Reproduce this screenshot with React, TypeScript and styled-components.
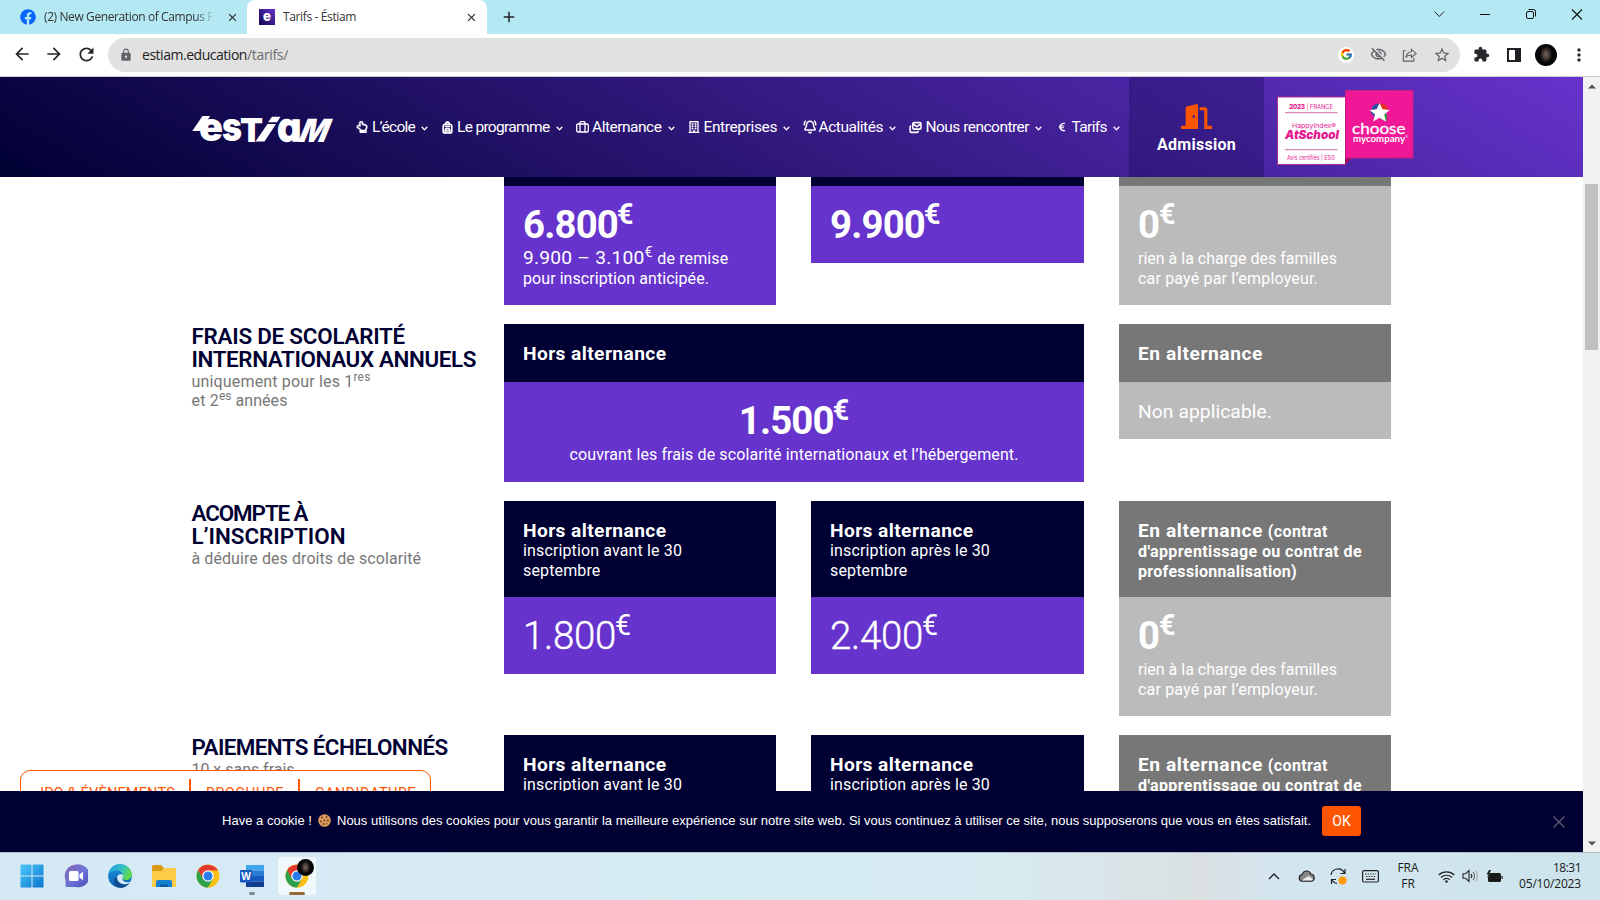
import React, { useLayoutEffect, useRef, useState } from "react";
import styled, { createGlobalStyle } from "styled-components";
import { Backpack, BellRing, Mails } from "lucide-react";
import { FaFacebook, FaDoorOpen, FaRegHandPointUp, FaRegBuilding, FaChevronDown, FaEuroSign } from "react-icons/fa";
import {
  MdArrowBack, MdArrowForward, MdRefresh, MdLock, MdOutlineVisibilityOff, MdStarBorder,
  MdExtension, MdMoreVert, MdClose, MdAdd,
} from "react-icons/md";
import { FcGoogle } from "react-icons/fc";

const NAVY = "#000033";
const VIOLET = "#6633cc";
const ORANGE = "#ff5500";

const GlobalStyle = createGlobalStyle`
  * { box-sizing: border-box; }
  body { margin: 0; background: #fff; font-family: Roboto, "Open Sans", sans-serif; overflow: hidden; }
  svg { display: block; flex: none; }
`;

/* Text tracked so that it spans a given width. */
const FitSpan = styled.span`
  white-space: nowrap;
`;
function Fit({ w, children }: { w: number; children: string }) {
  const ref = useRef<HTMLSpanElement>(null);
  const [track, setTrack] = useState(0);
  useLayoutEffect(() => {
    if (ref.current) {
      const natural = ref.current.getBoundingClientRect().width;
      setTrack((w - natural) / children.length);
    }
  }, []);
  return <FitSpan ref={ref} style={{ letterSpacing: `${track}px` }}>{children}</FitSpan>;
}

const Screen = styled.div`
  width: 1600px;
  height: 900px;
  display: flex;
  flex-direction: column;
  overflow: hidden;
`;

/* ---------- browser chrome ---------- */
const TabStrip = styled.div`
  height: 34px;
  flex: none;
  display: flex;
  background: #b4e8f3;
  font: 12px/34px "Open Sans", "Noto Sans", sans-serif;
  color: #333;
`;
const Tab = styled.div<{ $active?: boolean; $width: number }>`
  width: ${(p) => p.$width}px;
  padding: 0 ${(p) => (p.$active ? 9 : 8)}px 0 ${(p) => (p.$active ? 12 : 20)}px;
  display: flex;
  align-items: center;
  background: ${(p) => (p.$active ? "#fff" : "transparent")};
  border-radius: ${(p) => (p.$active ? "8px 8px 0 0" : 0)};
`;
const TabTitle = styled.div<{ $fade?: boolean }>`
  flex: 1;
  margin: 0 14px 0 8px;
  overflow: hidden;
  white-space: nowrap;
  ${(p) => p.$fade && "mask-image: linear-gradient(to right, #000 90%, rgba(0,0,0,.15) 100%);"}
`;
const Favicon = styled.div`
  width: 16px;
  height: 16px;
  background: linear-gradient(45deg, #100550, #6633cc);
  color: #fff;
  font: 900 13px/14px Inter, sans-serif;
  text-align: center;
`;
const NewTab = styled.div`
  flex: 1;
  display: flex;
  align-items: center;
  padding-left: 13px;
`;
const WindowButtons = styled.div`
  display: flex;
  width: 184px;
  height: 28px;
  align-items: center;
  svg { width: 46px; }
`;
const Toolbar = styled.div`
  height: 43px;
  flex: none;
  display: flex;
  align-items: center;
  border-bottom: 1px solid #c9cccd;
  color: #27282b;
  padding: 0 10px 1px 12px;
`;
const NavButtons = styled.div`
  display: flex;
  gap: 12px;
  width: 96px;
`;
const Omnibox = styled.div`
  width: 1352px;
  height: 34px;
  border-radius: 17px;
  background: #e1e1e1;
  display: flex;
  align-items: center;
  padding: 0 9px 0 11px;
  font: 14px/34px "Open Sans", "Noto Sans", sans-serif;
  color: #5f6368;
`;
const Url = styled.div`
  flex: 1;
  padding-left: 9px;
  color: #6b6e71;
  b { font-weight: 400; color: #222; }
`;
const OmniIcons = styled.div`
  display: flex;
  align-items: center;
  gap: 15px;
`;
const GoogleDisc = styled.div`
  width: 16px;
  height: 16px;
  margin-right: 1px;
  border-radius: 50%;
  background: #fff;
  display: grid;
  place-items: center;
`;
const Extensions = styled.div`
  flex: 1;
  display: flex;
  align-items: center;
  padding-left: 13px;
`;
const SidePanel = styled.div`
  width: 14px;
  height: 14px;
  border: 2px solid #202124;
  border-right-width: 6px;
  margin: 0 14px 0 17px;
`;
const Avatar = styled.div<{ $size: number }>`
  width: ${(p) => p.$size}px;
  height: ${(p) => p.$size}px;
  border-radius: 50%;
  background: radial-gradient(ellipse 28% 38% at 50% 48%, #77665d 0%, #3c302c 60%, #060606 100%);
`;
const Dots = styled.div`
  margin-left: 12px;
`;

/* ---------- page ---------- */
const Viewport = styled.div`
  height: 775px;
  flex: none;
  display: flex;
`;
const Page = styled.div`
  width: 1583px;
  height: 775px;
  display: flex;
  flex-direction: column;
  overflow: hidden;
`;
const Scrollbar = styled.div`
  width: 17px;
  background: #f1f1f1;
  display: flex;
  flex-direction: column;
  align-items: center;
  justify-content: space-between;
  padding: 7px 0 6px;
`;
const ScrollTrack = styled.div`
  flex: 1;
  width: 13px;
  padding-top: 95px;
`;
const Thumb = styled.div`
  height: 166px;
  background: #c1c1c1;
`;
const Header = styled.header`
  height: 100px;
  flex: none;
  display: flex;
  align-items: stretch;
  padding-left: 192px;
  background: linear-gradient(30deg, ${NAVY}, ${VIOLET});
  color: #fff;
`;
const LogoBox = styled.div`
  width: 164px;
  padding-top: 39px;
`;
const Menu = styled.nav`
  display: flex;
  font-size: 15.5px;
  line-height: 20px;
  padding: 40px 1px 0 0;
`;
const MenuItem = styled.div<{ $width: number; $lead: number }>`
  width: ${(p) => p.$width}px;
  display: flex;
  height: 20px;
  align-items: center;
  & > :first-child { width: ${(p) => p.$lead}px; flex: none; }
  & > :last-child { margin: 3px 0 0 6px; stroke: currentColor; stroke-width: 30px; }
`;
const Admission = styled.div`
  width: 135px;
  background: rgba(0, 0, 51, 0.25);
  display: flex;
  flex-direction: column;
  align-items: center;
  padding-top: 24px;
  font-weight: 700;
  font-size: 16px;
  line-height: 20px;
  svg { color: ${ORANGE}; margin-bottom: 3px; }
`;
const Badges = styled.div`
  display: flex;
  padding: 13px 0 0 13px;
`;

const Content = styled.main`
  height: 614px;
  flex: none;
  overflow: hidden;
  padding-left: 192px;
`;
const Row = styled.section<{ $height: number }>`
  height: ${(p) => p.$height}px;
  display: grid;
  grid-template-columns: 312px 307px 308px 272px;
  align-items: start;
`;
const Label = styled.div`
  font-size: 16px;
  line-height: 19px;
  color: #777;
  margin-left: -0.5px;
  sup { font-size: 12px; line-height: 0; vertical-align: 6px; }
`;
const LabelTitle = styled.h3`
  margin: 0 0 1px;
  padding-top: 1px;
  font-size: 22.4px;
  line-height: 23px;
  font-weight: 600;
  color: ${NAVY};
`;
const Card = styled.article<{ $wide?: boolean; $mid?: boolean }>`
  color: #fff;
  width: ${(p) => (p.$wide ? 580 : p.$mid ? 273 : 272)}px;
  ${(p) => p.$wide && "grid-column: span 2;"}
`;
const CardHead = styled.header<{ $gray?: boolean; $height: number }>`
  height: ${(p) => p.$height}px;
  overflow: hidden;
  background: ${(p) => (p.$gray ? "#777" : NAVY)};
  padding: ${(p) => (p.$height > 10 ? "20px 19px 0" : 0)};
  font-size: 19.2px;
  line-height: 19px;
  font-weight: 700;
`;
const Small = styled.span<{ $bold?: boolean }>`
  font-size: 16px;
  font-weight: ${(p) => (p.$bold ? 700 : 400)};
`;
const CardBody = styled.div<{ $gray?: boolean; $height: number; $center?: boolean }>`
  height: ${(p) => p.$height}px;
  background: ${(p) => (p.$gray ? "#bbb" : VIOLET)};
  padding: 20px 19px 0;
  font-size: 19.2px;
  line-height: 19px;
  text-align: ${(p) => (p.$center ? "center" : "left")};
  sup { font-size: 14.4px; line-height: 0; vertical-align: 7px; }
`;
const Price = styled.div<{ $light?: boolean }>`
  font-size: 38.4px;
  line-height: 38px;
  margin-bottom: 4px;
  font-weight: ${(p) => (p.$light ? 300 : 700)};
  -webkit-text-stroke: ${(p) => (p.$light ? "0.4px #fff" : "0")};
  && sup {
    font-size: 28.8px;
    line-height: 0;
    vertical-align: 14px;
    margin-left: -1px;
    font-weight: ${(p) => (p.$light ? 400 : 700)};
    -webkit-text-stroke: 0;
  }
`;

const QuickLinks = styled.div`
  position: absolute;
  left: 20px;
  top: 770px;
  width: 411px;
  height: 50px;
  border: 1px solid ${ORANGE};
  border-radius: 10px;
  background: #fff;
  display: flex;
  padding-top: 8px;
  color: ${ORANGE};
  font-size: 14.4px;
  font-weight: 400;
  line-height: 29px;
`;
const QuickLink = styled.div<{ $width: number }>`
  width: ${(p) => p.$width}px;
  padding: 0 0 0 15px;
  & + & { border-left: 2px solid ${ORANGE}; }
`;
const CookieBar = styled.div`
  height: 61px;
  flex: none;
  position: relative;
  background: ${NAVY};
  color: #fff;
  display: flex;
  align-items: center;
  padding: 0 18px 0 222px;
  font: 13px/20px "Liberation Sans", Arial, sans-serif;
`;
const CookieText = styled.div`
  display: flex;
  align-items: center;
  gap: 6px;
  width: 1100px;
  padding-bottom: 2px;
`;
const OkButton = styled.button`
  width: 39px;
  height: 30px;
  margin-bottom: 1px;
  padding: 0;
  border: 0;
  border-radius: 3px;
  background: ${ORANGE};
  color: #fff;
  font: 14px/28px Roboto, sans-serif;
`;
const CookieClose = styled.div`
  flex: 1;
  display: flex;
  justify-content: flex-end;
`;

/* ---------- taskbar ---------- */
const Taskbar = styled.footer`
  height: 48px;
  flex: none;
  border-top: 1px solid #b5bcc3;
  display: flex;
  align-items: center;
  justify-content: space-between;
  padding: 0 19px 1px 10px;
  background: linear-gradient(to right, #d5e9f5 0%, #d8ebf5 33%, #d4edf3 45%, #d8ecf2 62%, #dae0e2 75%, #d3e6f0 80%, #cde4ec 100%);
  font: 12px/16px "Open Sans", "Noto Sans", sans-serif;
  color: #1b1b1b;
`;
const Apps = styled.div`
  display: flex;
  align-items: center;
`;
const TaskApp = styled.div<{ $active?: boolean }>`
  position: relative;
  width: ${(p) => (p.$active ? 38 : 44)}px;
  height: 38px;
  margin-left: ${(p) => (p.$active ? 4 : 0)}px;
  display: grid;
  place-items: center;
  border-radius: 4px;
  background: ${(p) => (p.$active ? "rgba(255,255,255,.65)" : "transparent")};
`;
const RunMark = styled.div<{ $active?: boolean }>`
  position: absolute;
  bottom: 0;
  left: 50%;
  transform: translateX(-50%);
  width: ${(p) => (p.$active ? 16 : 6)}px;
  height: 3px;
  border-radius: 2px;
  background: ${(p) => (p.$active ? "#97693a" : "#7e8a93")};
`;
const AppBadge = styled.div`
  position: absolute;
  right: 2px;
  top: 2px;
`;
const Tray = styled.div`
  display: flex;
  align-items: center;
`;
const Slot = styled.div<{ $width: number }>`
  width: ${(p) => p.$width}px;
  display: flex;
  justify-content: center;
  text-align: center;
`;
const Clock = styled.div`
  width: 74px;
  text-align: right;
`;

function ChromeIcon() {
  return (
    <svg width="24" height="24" viewBox="0 0 48 48">
      <circle cx="24" cy="24" r="23" fill="#fbc116" />
      <path d="M4.1 12.5A23 23 0 0 1 43.9 13H24L14 30Z" fill="#e33b2e" />
      <path d="M4.1 12.5A23 23 0 0 0 24 47L34 29.500L24 24L14 29Z" fill="#2da14c" />
      <circle cx="24" cy="24" r="11.500" fill="#fff" />
      <circle cx="24" cy="24" r="9" fill="#2b7de9" />
    </svg>
  );
}

function Logo() {
  return (
    <svg width="141" height="28" viewBox="0 0 141 28" fill="#fff">
      <path d="M10.500 0H18L15 5L12 9.500L8 15H.3Z" />
      <g fontFamily="Inter, sans-serif" fontWeight="900">
        <text x="7" y="25" fontSize="40" textLength="24" lengthAdjust="spacingAndGlyphs">e</text>
        <text x="30" y="25" fontSize="40" textLength="20" lengthAdjust="spacingAndGlyphs">s</text>
        <text x="48" y="25.500" fontSize="32.500" textLength="23" lengthAdjust="spacingAndGlyphs">T</text>
        <text x="85" y="25" fontSize="39" textLength="25" lengthAdjust="spacingAndGlyphs" fontFamily="DejaVu Sans, sans-serif" fontWeight="700" stroke="#fff" strokeWidth="1.400">ɑ</text>
        <text transform="translate(105 25.500) skewX(-22)" fontSize="32" textLength="28" lengthAdjust="spacingAndGlyphs">M</text>
      </g>
      <path d="M80 .8H88.500L85 6.300H76ZM75.500 8H84L72.500 25.500H63.500Z" />
    </svg>
  );
}

function CertificationBadges() {
  return (
    <svg width="137" height="76" viewBox="0 0 137 76">
      <rect x="0.5" y="7" width="68" height="67.500" fill="#fff" stroke="#b0308f" />
      <path d="M68 68h7l-7 7z" fill="#a01060" />
      <rect x="68.500" y="0.500" width="67.500" height="67.500" fill="#f01896" stroke="#c41f86" />
      <g fill="#e51a92" fontFamily="Inter, sans-serif">
        <text x="12" y="18.500" fontSize="6.500" fontWeight="800" textLength="16">2023</text>
        <text x="29.500" y="18.500" fontSize="6.500" textLength="26.500" lengthAdjust="spacingAndGlyphs">| FRANCE</text>
        <path d="M8 22.600h52.500M8 59.600h52.500" stroke="#d98bb8" strokeWidth="1.200" />
        <text x="15" y="37.500" fontSize="6.500" textLength="44" lengthAdjust="spacingAndGlyphs">HappyIndex®</text>
        <text x="8" y="48.500" fontSize="11.500" fontWeight="900" fontStyle="italic" textLength="54" lengthAdjust="spacingAndGlyphs">AtSchool</text>
        <text x="10" y="69.500" fontSize="5.800" textLength="48" lengthAdjust="spacingAndGlyphs">Avis certifiés | ESG</text>
      </g>
      <path d="M102.500 13L96 15.500 93.500 22 97 27z" fill="#2a4fa0" />
      <path d="M102.500 13L109 15 111.500 21 106 22z" fill="#e0341c" />
      <path d="M105 24L110 24 109.500 31 103 29z" fill="#20a038" />
      <path d="M102.500 13l3 6.300 7.200.6-5.500 4.700 1.700 7-6.400-3.800-6.200 3.800 1.700-7-5.500-4.700 7.200-.6z" fill="#fff" />
      <g fill="#fff" fontFamily="Lato, sans-serif">
        <text x="75" y="44" fontSize="16" textLength="53.500" lengthAdjust="spacingAndGlyphs" stroke="#fff" strokeWidth="0.300">choose</text>
        <text x="76" y="51.500" fontSize="9.500" fontWeight="700" textLength="52" lengthAdjust="spacingAndGlyphs">mycompany</text>
        <text x="128.500" y="48" fontSize="3.500">®</text>
      </g>
    </svg>
  );
}

function SuitcaseIcon() {
  return (
    <svg width="13" height="12" viewBox="0 0 13 12" fill="none" stroke="currentColor" strokeWidth="1.300">
      <rect x="0.700" y="3" width="11.600" height="8" rx="1.200" />
      <path d="M4 11V1.700a1 1 0 0 1 1-1h3a1 1 0 0 1 1 1V11" />
    </svg>
  );
}

const menu = [
  { icon: <FaRegHandPointUp size={12} stroke="#fff" strokeWidth={25} />, label: "L’école", w: 43, lead: 16, width: 85 },
  { icon: <Backpack size={13} strokeWidth={3} />, label: "Le programme", w: 92.5, lead: 16, width: 135 },
  { icon: <SuitcaseIcon />, label: "Alternance", w: 69.5, lead: 16, width: 112 },
  { icon: <FaRegBuilding size={12} stroke="#fff" strokeWidth={12} />, label: "Entreprises", w: 73.5, lead: 15.5, width: 115 },
  { icon: <BellRing size={14} strokeWidth={2.6} />, label: "Actualités", w: 64.5, lead: 15.5, width: 106 },
  { icon: <Mails size={13} strokeWidth={2.8} />, label: "Nous rencontrer", w: 103.5, lead: 16.5, width: 148 },
  { icon: <FaEuroSign size={10} />, label: "Tarifs", w: 35.5, lead: 14.5, width: 71 },
];

function HorsHead({ when, w }: { when: string; w: number }) {
  return (
    <CardHead $height={96}>
      <Fit w={143.500}>Hors alternance</Fit><br />
      <Small><Fit w={w}>{when}</Fit><br /><Fit w={77.500}>septembre</Fit></Small>
    </CardHead>
  );
}
function AlternanceHead() {
  return (
    <CardHead $gray $height={96}>
      <Fit w={125}>En alternance</Fit>{" "}
      <Small $bold>
        <Fit w={60}>(contrat</Fit><br />
        <Fit w={224}>d'apprentissage ou contrat de</Fit><br />
        <Fit w={159}>professionnalisation)</Fit>
      </Small>
    </CardHead>
  );
}
function FreeBody() {
  return (
    <CardBody $gray $height={119}>
      <Price>0<sup>€</sup></Price>
      <Small><Fit w={199}>rien à la charge des familles</Fit><br /><Fit w={180}>car payé par l’employeur.</Fit></Small>
    </CardBody>
  );
}

export default function App() {
  return (
    <Screen>
      <GlobalStyle />
      <TabStrip>
        <Tab $width={247}>
          <FaFacebook size={16} color="#0866ff" />
          <TabTitle $fade><Fit w={169}>(2) New Generation of Campus F</Fit></TabTitle>
          <MdClose size={13} color="#222" />
        </Tab>
        <Tab $width={240} $active>
          <Favicon>e</Favicon>
          <TabTitle><Fit w={73}>Tarifs - Éstiam</Fit></TabTitle>
          <MdClose size={13} color="#222" />
        </Tab>
        <NewTab><MdAdd size={18} color="#222" /></NewTab>
        <WindowButtons>
          <svg height="28" viewBox="0 0 46 28" fill="none" stroke="#222"><path d="M18.500 11.500l4.800 5 4.800-5" /></svg>
          <svg height="28" viewBox="0 0 46 28" fill="none" stroke="#111"><path d="M18 14.500h10" /></svg>
          <svg height="28" viewBox="0 0 46 28" fill="none" stroke="#111"><rect x="18.500" y="11.500" width="7" height="7" rx="1.500" /><path d="M20.500 9.500h5a2 2 0 0 1 2 2v5" /></svg>
          <svg height="28" viewBox="0 0 46 28" fill="none" stroke="#111" strokeWidth="1.100"><path d="M18 9.500l10 10M28 9.500l-10 10" /></svg>
        </WindowButtons>
      </TabStrip>
      <Toolbar>
        <NavButtons>
          <MdArrowBack size={20} /><MdArrowForward size={20} /><MdRefresh size={21} />
        </NavButtons>
        <Omnibox>
          <MdLock size={14} />
          <Url><b><Fit w={105}>estiam.education</Fit></b><Fit w={41}>/tarifs/</Fit></Url>
          <OmniIcons>
            <GoogleDisc><FcGoogle size={13} /></GoogleDisc>
            <MdOutlineVisibilityOff size={17} />
            <svg width="16" height="16" viewBox="0 0 17 16" fill="none" stroke="#5f6368" strokeWidth="1.200"><path d="M4 3.500H1.500v11h11V11M10 2l5 4.300-5 4.300V8C7 8 5 9 4 11c.4-3.500 2.500-6 6-6.500z" /></svg>
            <MdStarBorder size={18} />
          </OmniIcons>
        </Omnibox>
        <Extensions>
          <MdExtension size={17} />
          <SidePanel />
          <Avatar $size={22} />
          <Dots><MdMoreVert size={20} /></Dots>
        </Extensions>
      </Toolbar>

      <Viewport>
        <Page>
          <Header>
            <LogoBox><Logo /></LogoBox>
            <Menu>
              {menu.map((m) => (
                <MenuItem key={m.label} $width={m.width} $lead={m.lead}>
                  <span>{m.icon}</span>
                  <Fit w={m.w}>{m.label}</Fit>
                  <FaChevronDown size={7} />
                </MenuItem>
              ))}
            </Menu>
            <Admission>
              <FaDoorOpen size={31} />
              <Fit w={79}>Admission</Fit>
            </Admission>
            <Badges><CertificationBadges /></Badges>
          </Header>

          <Content>
            <Row $height={147}>
              <Label />
              <Card>
                <CardHead $height={9} />
                <CardBody $height={119}>
                  <Price><Fit w={95}>6.800</Fit><sup>€</sup></Price>
                  <Fit w={121.500}>9.900 – 3.100</Fit><sup>€</sup>{" "}
                  <Small><Fit w={71}>de remise</Fit><br /><Fit w={186}>pour inscription anticipée.</Fit></Small>
                </CardBody>
              </Card>
              <Card $mid>
                <CardHead $height={9} />
                <CardBody $height={77}><Price><Fit w={95}>9.900</Fit><sup>€</sup></Price></CardBody>
              </Card>
              <Card>
                <CardHead $gray $height={9} />
                <FreeBody />
              </Card>
            </Row>

            <Row $height={177}>
              <Label>
                <LabelTitle><Fit w={213.500}>FRAIS DE SCOLARITÉ</Fit><br /><Fit w={284.500}>INTERNATIONAUX ANNUELS</Fit></LabelTitle>
                <Fit w={162}>uniquement pour les 1</Fit><sup><Fit w={17}>res</Fit></sup><br />
                <Fit w={27.500}>et 2</Fit><sup><Fit w={12.500}>es</Fit></sup> <Fit w={52}>années</Fit>
              </Label>
              <Card $wide>
                <CardHead $height={58}><Fit w={143.500}>Hors alternance</Fit></CardHead>
                <CardBody $height={100} $center>
                  <Price><Fit w={95}>1.500</Fit><sup>€</sup></Price>
                  <Small><Fit w={449}>couvrant les frais de scolarité internationaux et l’hébergement.</Fit></Small>
                </CardBody>
              </Card>
              <Card>
                <CardHead $gray $height={58}><Fit w={125}>En alternance</Fit></CardHead>
                <CardBody $gray $height={57}><Fit w={134}>Non applicable.</Fit></CardBody>
              </Card>
            </Row>

            <Row $height={234}>
              <Label>
                <LabelTitle><Fit w={116}>ACOMPTE À</Fit><br /><Fit w={154}>L’INSCRIPTION</Fit></LabelTitle>
                <Fit w={229.500}>à déduire des droits de scolarité</Fit>
              </Label>
              <Card>
                <HorsHead when="inscription avant le 30" w={159} />
                <CardBody $height={77}><Price $light><Fit w={93}>1.800</Fit><sup>€</sup></Price></CardBody>
              </Card>
              <Card $mid>
                <HorsHead when="inscription après le 30" w={160} />
                <CardBody $height={77}><Price $light><Fit w={93}>2.400</Fit><sup>€</sup></Price></CardBody>
              </Card>
              <Card>
                <AlternanceHead />
                <FreeBody />
              </Card>
            </Row>

            <Row $height={96}>
              <Label>
                <LabelTitle><Fit w={256}>PAIEMENTS ÉCHELONNÉS</Fit></LabelTitle>
                <Fit w={103}>10 x sans frais</Fit>
              </Label>
              <Card><HorsHead when="inscription avant le 30" w={159} /></Card>
              <Card $mid><HorsHead when="inscription après le 30" w={160} /></Card>
              <Card><AlternanceHead /></Card>
            </Row>
          </Content>

          <QuickLinks>
            <QuickLink $width={168}><Fit w={139}>JPO & ÉVÈNEMENTS</Fit></QuickLink>
            <QuickLink $width={109}><Fit w={78}>BROCHURE</Fit></QuickLink>
            <QuickLink $width={130}><Fit w={101}>CANDIDATURE</Fit></QuickLink>
          </QuickLinks>

          <CookieBar>
            <CookieText>
              <Fit w={90}>Have a cookie !</Fit>
              <svg width="13" height="13" viewBox="0 0 13 13">
                <circle cx="6.500" cy="6.500" r="6.300" fill="#dd9b5c" />
                <g fill="#6b3c22"><circle cx="4" cy="3.500" r="1" /><circle cx="8.500" cy="3" r=".9" /><circle cx="6.500" cy="6.500" r="1" /><circle cx="3" cy="7.500" r=".9" /><circle cx="9.800" cy="6.500" r="1" /><circle cx="5.500" cy="10" r=".9" /><circle cx="8.800" cy="9.700" r=".8" /></g>
              </svg>
              <Fit w={974}>Nous utilisons des cookies pour vous garantir la meilleure expérience sur notre site web. Si vous continuez à utiliser ce site, nous supposerons que vous en êtes satisfait.</Fit>
            </CookieText>
            <OkButton>OK</OkButton>
            <CookieClose>
              <svg width="12" height="12" viewBox="0 0 12 12" stroke="#55556f" strokeWidth="1.500"><path d="M.5.5l11 11M11.500.5l-11 11" /></svg>
            </CookieClose>
          </CookieBar>
        </Page>
        <Scrollbar>
          <svg width="8" height="5" viewBox="0 0 8 5"><path d="M0 4.500L4 .5l4 4z" fill="#505050" /></svg>
          <ScrollTrack><Thumb /></ScrollTrack>
          <svg width="8" height="5" viewBox="0 0 8 5"><path d="M0 .5h8l-4 4z" fill="#505050" /></svg>
        </Scrollbar>
      </Viewport>

      <Taskbar>
        <Apps>
          <TaskApp>
            <svg width="24" height="24" viewBox="0 0 24 24"><defs><linearGradient id="win" x1="0" y1="0" x2="1" y2="1"><stop offset="0" stopColor="#4cc8f8" /><stop offset="1" stopColor="#0a74d0" /></linearGradient></defs><path d="M.5.5h11v11H.5zM12.500.5h11v11h-11zM.5 12.500h11v11H.5zM12.500 12.500h11v11h-11z" fill="url(#win)" /></svg>
          </TaskApp>
          <TaskApp>
            <svg width="24" height="24" viewBox="0 0 24 24"><defs><linearGradient id="chat" x1="0" y1="0" x2="1" y2="1"><stop offset="0" stopColor="#8a62ad" /><stop offset=".5" stopColor="#6f74d8" /><stop offset="1" stopColor="#4a4bb8" /></linearGradient></defs><path d="M12 .5a11.500 11.500 0 1 1-.5 22.500H1.500V16A11.500 11.500 0 0 1 12 .5z" fill="url(#chat)" /><rect x="5" y="7" width="9.500" height="10" rx="1.500" fill="#fff" /><path d="M15.500 10.500L19 7.800v8.400l-3.500-2.700z" fill="#fff" /></svg>
          </TaskApp>
          <TaskApp>
            <svg width="24" height="24" viewBox="0 0 24 24">
              <defs>
                <linearGradient id="edgeTop" x1="0" y1="0" x2="1" y2=".4"><stop offset="0" stopColor="#1d9fdc" /><stop offset=".6" stopColor="#35c1c8" /><stop offset="1" stopColor="#62da4a" /></linearGradient>
                <linearGradient id="edgeLow" x1="0" y1="0" x2="0" y2="1"><stop offset="0" stopColor="#1a8fdc" /><stop offset="1" stopColor="#0f62b5" /></linearGradient>
              </defs>
              <circle cx="12" cy="12" r="11.800" fill="url(#edgeLow)" />
              <path d="M.5 10C2 3.500 6.500.2 12 .2c7 0 11.800 5 11.800 10.300 0 3.500-2.800 5.500-6 5.500-2.500 0-4-1-3.500-2 .8-1 1-2 .6-3.200C13.500 7 10 6 7 6.800 4 7.500 1.500 8.500.5 10z" fill="url(#edgeTop)" />
              <path d="M8.500 13c0 5 4.500 8 9 7.500 2 0 3.500-1 4.500-2-2.500 4-7 6-11 5-5-1.300-7-8-2.500-10.500z" fill="#124a8c" />
              <path d="M14.300 14c.8-1 1-2 .6-3.200-1.400-1.200-4.400-.8-5.400 1.200-1.500 4.500 3 9.500 9.500 8 2-.5 3.300-1.500 3.800-2.500-3 1.500-9 .5-8.500-3.500z" fill="#d6eaf5" />
            </svg>
          </TaskApp>
          <TaskApp>
            <svg width="24" height="24" viewBox="0 0 24 24"><path d="M0 3a2 2 0 0 1 2-2h7l3 3h10a2 2 0 0 1 2 2v5H0z" fill="#d99a12" /><path d="M0 7h9l3-3h10a2 2 0 0 1 2 2v16a1 1 0 0 1-1 1H1a1 1 0 0 1-1-1z" fill="#fdcb45" /><path d="M4 23v-5a2 2 0 0 1 2-2h12a2 2 0 0 1 2 2v5z" fill="#1480d0" /><path d="M8 23v-2.500h8V23z" fill="#0c5a9c" /></svg>
          </TaskApp>
          <TaskApp><ChromeIcon /></TaskApp>
          <TaskApp>
            <svg width="24" height="24" viewBox="0 0 24 24"><path d="M6 1h18v5.500H6z" fill="#41a5ee" /><path d="M6 6.500h18V12H6z" fill="#2b7cd3" /><path d="M6 12h18v5.500H6z" fill="#185abd" /><path d="M6 17.500h18V23H6z" fill="#103f91" /><rect x="0" y="6" width="12.500" height="12.500" rx="1" fill="#185abd" /><text x="6.200" y="16" fontSize="10" fontWeight="700" textAnchor="middle" fill="#fff" fontFamily="Open Sans, sans-serif">W</text></svg>
            <RunMark />
          </TaskApp>
          <TaskApp $active>
            <ChromeIcon />
            <AppBadge><Avatar $size={17} /></AppBadge>
            <RunMark $active />
          </TaskApp>
        </Apps>
        <Tray>
          <Slot $width={38}><svg width="12" height="8" viewBox="0 0 12 8" fill="none" stroke="#222" strokeWidth="1.400"><path d="M1 7l5-5 5 5" /></svg></Slot>
          <Slot $width={26}><svg width="17" height="12" viewBox="0 0 17 12" stroke="#222" strokeWidth="1.200"><path d="M4 11.200a3.300 3.300 0 0 1 0-6.500C5 2 6.500 1 8.500 1s3.700 1 4.300 3.200c2 .2 3.400 1.600 3.400 3.500s-1.400 3.500-3.400 3.500z" fill="#888" /><path d="M3.500 10.600l7-4.500 4.500 3-1 1.500z" fill="#eee" stroke="none" /></svg></Slot>
          <Slot $width={38}><svg width="17" height="17" viewBox="0 0 17 17" fill="none" stroke="#222" strokeWidth="1.200"><path d="M1 7a7 7 0 0 1 13.500-1.500M15 1v4.500h-4.500M7 15.500A7 7 0 0 1 2 12M1.500 16v-4.500H6" /><circle cx="12.500" cy="12.500" r="4" fill="#ff9a0a" stroke="none" /></svg></Slot>
          <Slot $width={26}><svg width="17" height="13" viewBox="0 0 17 13" fill="none" stroke="#222" strokeWidth="1.200"><rect x=".6" y=".6" width="15.800" height="11.400" rx="1.500" /><path d="M3 4h11M4 6.500h10" strokeDasharray="1.300 1.300" /><path d="M4 9.300h9" /></svg></Slot>
          <Slot $width={50}><span>FRA<br />FR</span></Slot>
          <Slot $width={26}><svg width="17" height="13" viewBox="0 0 17 13" fill="none" stroke="#222" strokeWidth="1.200"><path d="M.8 5a11 11 0 0 1 15.400 0M3 7.500a7.800 7.800 0 0 1 11 0M5.300 9.800a4.500 4.500 0 0 1 6.400 0" /><circle cx="8.500" cy="11.500" r="1.200" fill="#222" stroke="none" /></svg></Slot>
          <Slot $width={22}><svg width="17" height="14" viewBox="0 0 17 14" fill="none" stroke="#222" strokeWidth="1.100"><path d="M1 4.800h2.500L7 1.500v11L3.500 9.200H1zM9 5a3 3 0 0 1 0 4" /><path d="M11 3a6 6 0 0 1 0 8" stroke="#555" /><path d="M13.300 1.300a8.500 8.500 0 0 1 0 11.400" stroke="#aaa" /></svg></Slot>
          <Slot $width={26}><svg width="17" height="13" viewBox="0 0 17 13"><path d="M5 3h8.500a1.500 1.500 0 0 1 1.500 1.500v6a1.500 1.500 0 0 1-1.500 1.500h-10A1.500 1.500 0 0 1 2 10.500V7z" fill="#1b1b1b" /><path d="M15.500 6h1.200v3h-1.200zM3 0L.5 4.500h2L1 8l4.500-5h-2L5 0z" fill="#1b1b1b" /></svg></Slot>
          <Clock><Fit w={28}>18:31</Fit><br /><Fit w={62}>05/10/2023</Fit></Clock>
        </Tray>
      </Taskbar>
    </Screen>
  );
}
